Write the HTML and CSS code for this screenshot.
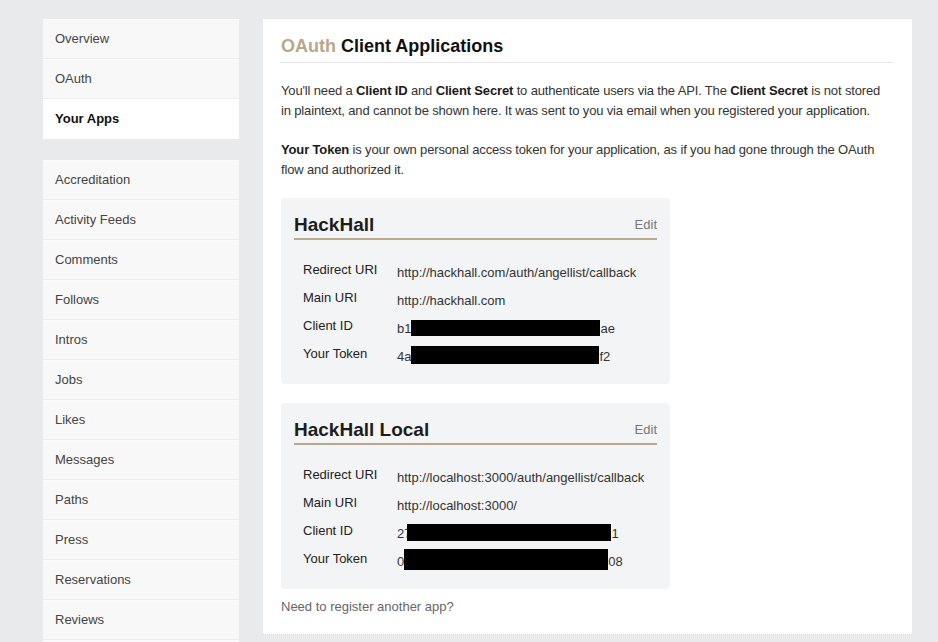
FILE: index.html
```html
<!DOCTYPE html>
<html>
<head>
<meta charset="utf-8">
<link rel="stylesheet" href="styles.css">
</head>
<body>
<div class="page">
  <nav class="sidebar">
    <ul class="group">
      <li class="item">Overview</li>
      <li class="item">OAuth</li>
      <li class="item active">Your Apps</li>
    </ul>
    <ul class="group">
      <li class="item">Accreditation</li>
      <li class="item">Activity Feeds</li>
      <li class="item">Comments</li>
      <li class="item">Follows</li>
      <li class="item">Intros</li>
      <li class="item">Jobs</li>
      <li class="item">Likes</li>
      <li class="item">Messages</li>
      <li class="item">Paths</li>
      <li class="item">Press</li>
      <li class="item">Reservations</li>
      <li class="item">Reviews</li>
      <li class="item">Search</li>
    </ul>
  </nav>
  <main class="panel">
    <h1 class="title"><span class="accent">OAuth</span> Client Applications</h1>
    <p class="text">You'll need a <b>Client ID</b> and <b>Client Secret</b> to authenticate users via the API. The <b>Client Secret</b> is not stored in plaintext, and cannot be shown here. It was sent to you via email when you registered your application.</p>
    <p class="text"><b>Your Token</b> is your own personal access token for your application, as if you had gone through the OAuth flow and authorized it.</p>

    <section class="card">
      <div class="card-head">
        <h2 class="card-title">HackHall</h2>
        <span class="edit">Edit</span>
      </div>
      <div class="rows">
        <div class="row"><span class="label">Redirect URI</span><span class="value">http://hackhall.com/auth/angellist/callback</span></div>
        <div class="row"><span class="label">Main URI</span><span class="value">http://hackhall.com</span></div>
        <div class="row"><span class="label">Client ID</span><span class="value">b1<span class="redact r1"></span>ae</span></div>
        <div class="row"><span class="label">Your Token</span><span class="value">4a<span class="redact r2"></span>f2</span></div>
      </div>
    </section>

    <section class="card">
      <div class="card-head">
        <h2 class="card-title">HackHall Local</h2>
        <span class="edit">Edit</span>
      </div>
      <div class="rows">
        <div class="row"><span class="label">Redirect URI</span><span class="value">http://localhost:3000/auth/angellist/callback</span></div>
        <div class="row"><span class="label">Main URI</span><span class="value">http://localhost:3000/</span></div>
        <div class="row"><span class="label">Client ID</span><span class="value">27<span class="redact r3"></span>1</span></div>
        <div class="row"><span class="label">Your Token</span><span class="value">0<span class="redact r4"></span>08</span></div>
      </div>
    </section>

    <p class="register">Need to register another app?</p>
  </main>
</div>
</body>
</html>
```

FILE: styles.css
```css
* { box-sizing: border-box; }
html, body { margin: 0; padding: 0; }
body {
  background: #e9eaec;
  font-family: "Liberation Sans", Arial, Helvetica, sans-serif;
  font-size: 13px;
  color: #333;
  height: 642px;
  overflow: hidden;
}
.page {
  display: flex;
  align-items: flex-start;
  gap: 24px;
  padding: 19px 0 0 43px;
}
.sidebar {
  width: 196px;
  flex: none;
  display: flex;
  flex-direction: column;
  gap: 21px;
}
.group {
  list-style: none;
  margin: 0;
  padding: 0;
  background: #f8f8f9;
}
.item {
  height: 40px;
  line-height: 37px;
  padding-left: 12px;
  color: #444;
  border-bottom: 1px solid #ebecef;
  border-top: 1px solid #fcfcfd;
}
.item:last-child { border-bottom-color: #f8f8f9; }
.item.active {
  background: #fff;
  color: #111;
  font-weight: bold;
  border-color: #fff;
}
.panel {
  width: 649px;
  flex: none;
  background: #fff;
  padding: 15px 19px 17px 18px;
  border-bottom: 1px dotted #d4d5d8;
}
.title {
  margin: 0;
  font-size: 18px;
  line-height: 24px;
  font-weight: bold;
  color: #111;
  padding-bottom: 4px;
  border-bottom: 1px solid #e6e6e8;
}
.accent { color: #b8a78b; }
.text {
  margin: 18px 0 0;
  line-height: 20px;
  color: #333;
  letter-spacing: -0.15px;
}
.text + .text { margin-top: 19px; }
.text b { color: #1a1a1a; }
.card {
  width: 389px;
  margin-top: 18px;
  background: #f3f4f6;
  border-radius: 4px;
  padding: 14px 13px 15px;
}
.card + .card { margin-top: 19px; }
.card-head {
  display: flex;
  justify-content: space-between;
  align-items: center;
  border-bottom: 2px solid #b9a88b;
  height: 28px;
}
.card-title {
  margin: 0;
  font-size: 19px;
  line-height: 24px;
  font-weight: bold;
  color: #1c1c1c;
}
.edit {
  color: #777;
  font-size: 13px;
  line-height: 20px;
}
.rows {
  padding: 17px 0 0 9px;
}
.row {
  display: flex;
  height: 28px;
  line-height: 18px;
}
.label {
  width: 94px;
  flex: none;
  color: #222;
  padding-top: 4px;
}
.value {
  color: #333;
  padding-top: 7px;
  white-space: nowrap;
}
.redact {
  display: inline-block;
  background: #000;
  vertical-align: middle;
}
.r1 { width: 189px; height: 16px; margin-top: -4px; }
.r2 { width: 188px; height: 18px; margin-top: -6px; }
.r3 { width: 204px; height: 17px; margin-left: -4px; margin-top: -4px; }
.r4 { width: 204px; height: 21px; margin-top: -6px; }
.register {
  margin: 8px 0 0;
  line-height: 20px;
  color: #666;
}
```
